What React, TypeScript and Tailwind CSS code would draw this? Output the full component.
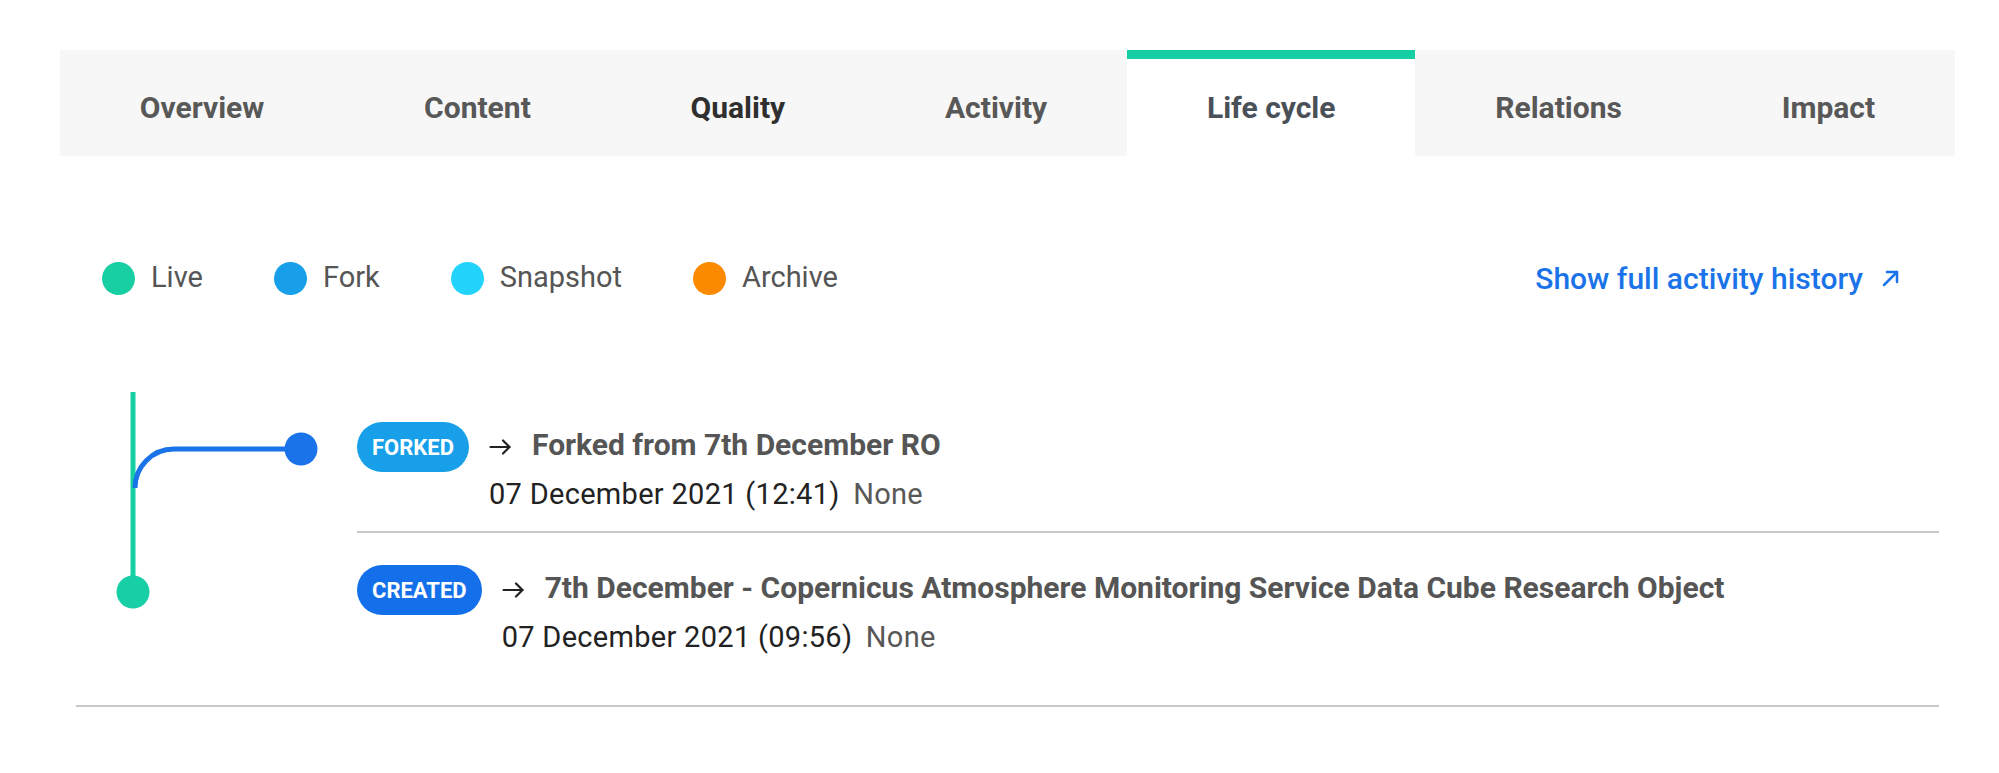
import React from "react";

const tabs = [
  { label: "Overview", color: "text-[#585858]" },
  { label: "Content", color: "text-[#585858]" },
  { label: "Quality", color: "text-[#2f2f2f]" },
  { label: "Activity", color: "text-[#585858]" },
  { label: "Life cycle", color: "text-[#4a5058]", active: true },
  { label: "Relations", color: "text-[#585858]" },
  { label: "Impact", color: "text-[#585858]" },
];

const legend = [
  { label: "Live", dot: "bg-[#18cfa3]" },
  { label: "Fork", dot: "bg-[#17a0e9]" },
  { label: "Snapshot", dot: "bg-[#22d4fb]" },
  { label: "Archive", dot: "bg-[#fc8a00]" },
];

function RightArrow() {
  return (
    <svg width="23" height="16" viewBox="0 0 23 16" fill="none" stroke="#222" strokeWidth="2.2" strokeLinecap="round" strokeLinejoin="round">
      <path d="M1.5 8h19" />
      <path d="M14 1.5 20.5 8 14 14.5" />
    </svg>
  );
}

function Entry({ badge, badgeColor, title, date, last }) {
  return (
    <div className={`flex gap-[20px] pt-[32px] ${last ? "pb-[51px]" : "pb-[20px] border-b-2 border-[#c8c8c8]"}`}>
      <span className={`h-[50px] px-[15px] rounded-full ${badgeColor} text-white text-[22px] font-bold flex items-center shrink-0`}>
        {badge}
      </span>
      <div className="flex flex-col">
        <div className="h-[50px] flex items-center gap-[20px]">
          <RightArrow />
          <span className="pb-[6px] text-[30px] font-bold text-[#555]">{title}</span>
        </div>
        <div className="mt-[5px] text-[29px] leading-[34px] tracking-[0.3px] text-[#222]">
          {date} <span className="ml-[6px] text-[#585858]">None</span>
        </div>
      </div>
    </div>
  );
}

export default function App() {
  return (
    <div className="w-full h-[773px] bg-white font-[Roboto,sans-serif] pt-[50px]">
      <div className="ml-[60px] w-[1895px]">
        <div className="flex h-[106px] bg-[#f7f7f7]">
          {tabs.map((t) => (
            <div
              key={t.label}
              className={`flex-auto flex items-center justify-center pt-[9px] text-[30px] font-bold ${t.color} ${t.active ? "bg-white shadow-[inset_0_9px_0_#17cfa4]" : ""}`}
            >
              {t.label}
            </div>
          ))}
        </div>

        <div className="px-[16px]">
          <div className="mt-[102px] h-[40px] flex items-center justify-between pl-[26px] pr-[38px]">
            <div className="flex items-center gap-[71px]">
              {legend.map((l) => (
                <div key={l.label} className="flex items-center gap-[16px]">
                  <span className={`w-[33px] h-[33px] rounded-full ${l.dot}`} />
                  <span className="text-[29px] text-[#555]">{l.label}</span>
                </div>
              ))}
            </div>
            <div className="flex items-center gap-[18px] text-[30px] font-medium text-[#1a73e8]">
              Show full activity history
              <svg width="20" height="20" viewBox="0 0 20 20" fill="none" stroke="#1a73e8" strokeWidth="2.5" strokeLinecap="round" strokeLinejoin="round">
                <path d="M3 17 16 4" />
                <path d="M6 4h10v10" />
              </svg>
            </div>
          </div>

          <div className="mt-[92px] flex border-b-2 border-[#c8c8c8]">
            <div className="w-[281px] shrink-0">
              <svg width="281" height="225" viewBox="0 0 281 225" fill="none">
                <path d="M57 2v200" stroke="#17cfa4" strokeWidth="5" />
                <circle cx="57" cy="202" r="16.5" fill="#17cfa4" />
                <path d="M59 98a39 39 0 0 1 39-39H225" stroke="#1a73e8" strokeWidth="5" />
                <circle cx="225" cy="59" r="16.5" fill="#1a73e8" />
              </svg>
            </div>
            <div className="flex-1">
              <Entry
                badge="FORKED"
                badgeColor="bg-[#17a0e9]"
                title="Forked from 7th December RO"
                date="07 December 2021 (12:41)"
              />
              <Entry
                badge="CREATED"
                badgeColor="bg-[#1470ea]"
                title="7th December - Copernicus Atmosphere Monitoring Service Data Cube Research Object"
                date="07 December 2021 (09:56)"
                last
              />
            </div>
          </div>
        </div>
      </div>
    </div>
  );
}
